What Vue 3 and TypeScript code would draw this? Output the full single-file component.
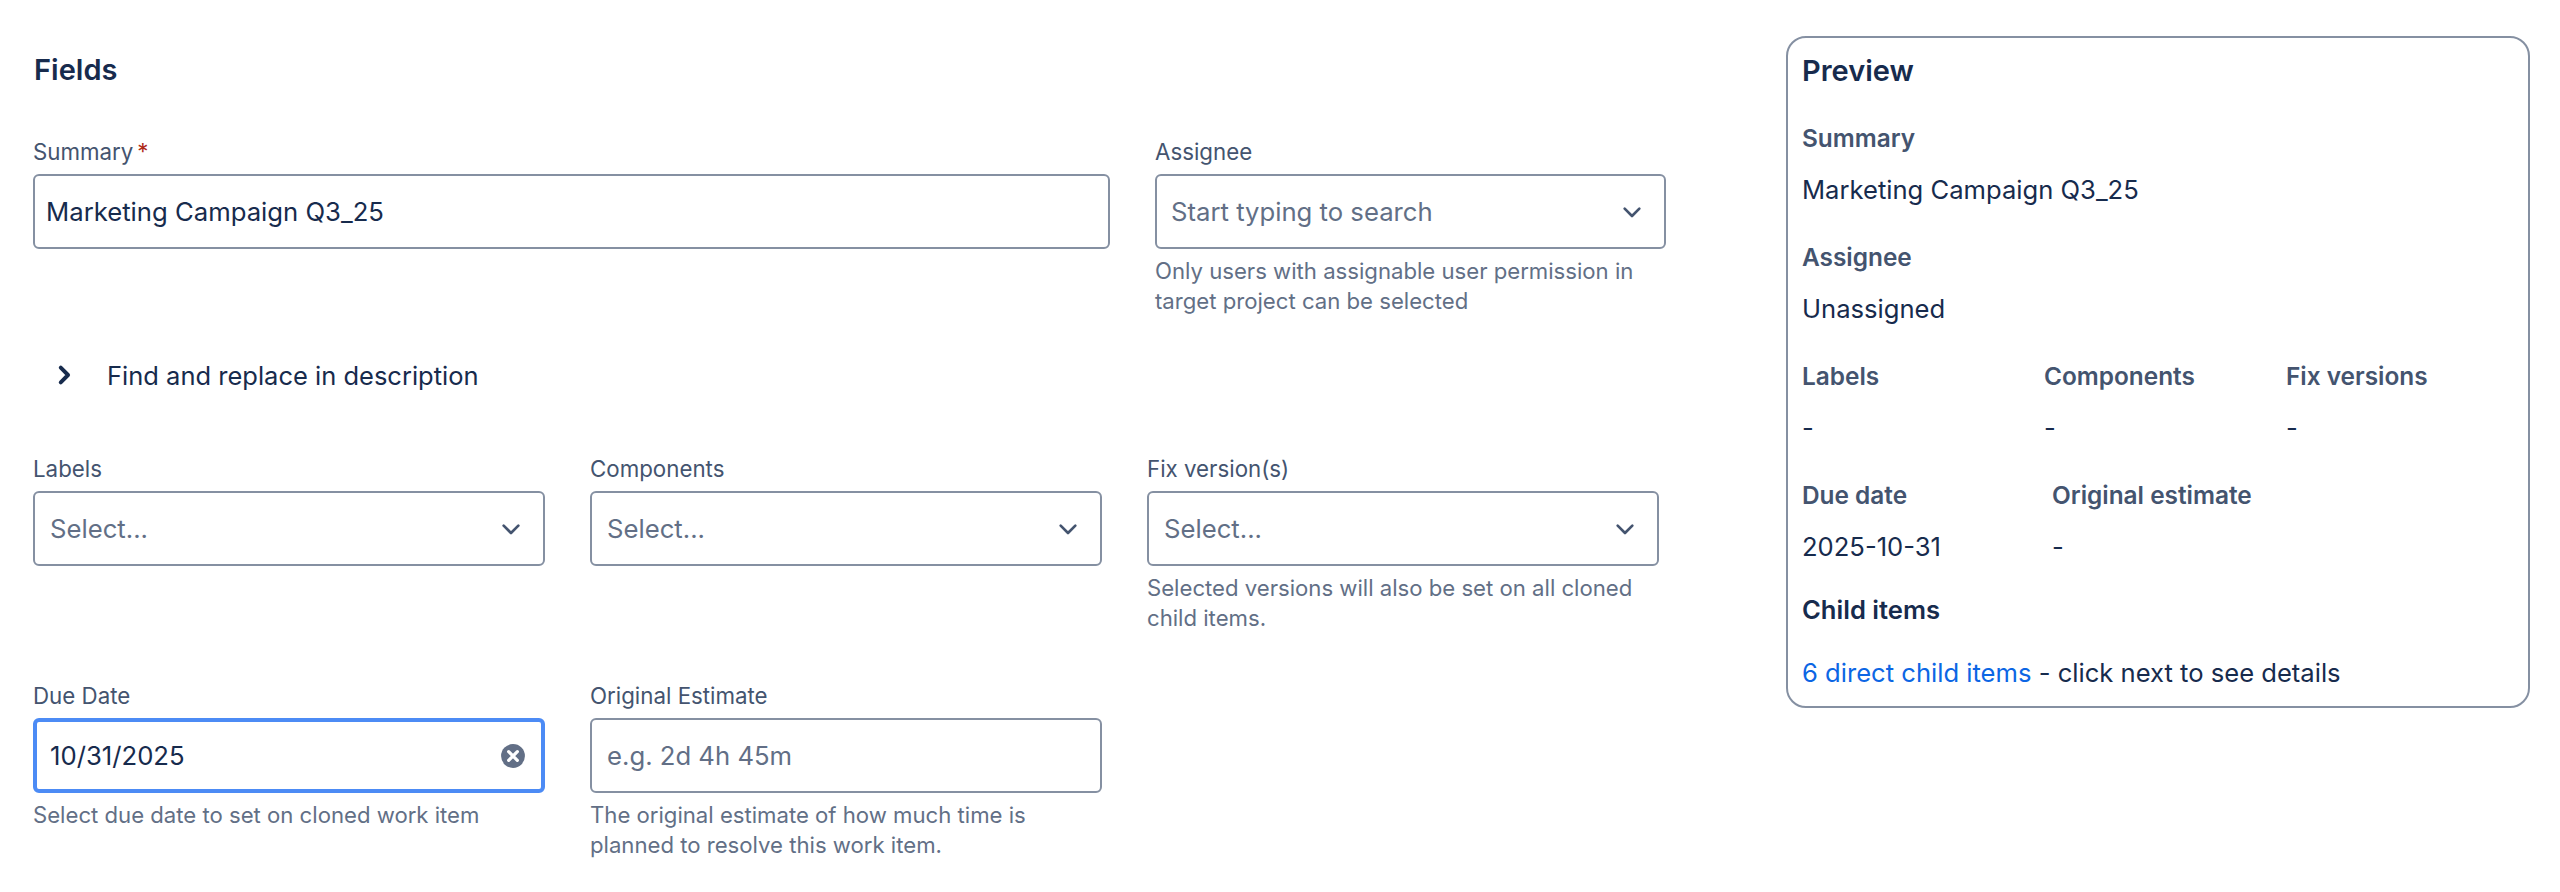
<script setup lang="ts">
interface Cell { label: string; value: string }
const rowA: Cell[] = [
  { label: 'Labels', value: '-' },
  { label: 'Components', value: '-' },
  { label: 'Fix versions', value: '-' },
]
</script>

<template>
  <div class="page">
    <main class="fields">
      <h2 class="title">Fields</h2>

      <div class="row first">
        <div class="field grow">
          <label class="label">Summary<span class="req">*</span></label>
          <div class="box"><span class="val">Marketing Campaign Q3_25</span></div>
        </div>
        <div class="field assignee">
          <label class="label">Assignee</label>
          <div class="box">
            <span class="ph">Start typing to search</span>
            <svg class="chev" viewBox="0 0 24 24"><path d="M6.500 9.500 12 15l5.500-5.500" /></svg>
          </div>
          <p class="help">Only users with assignable user permission in target project can be selected</p>
        </div>
      </div>

      <div class="toggle">
        <svg class="tri" viewBox="0 0 16 16"><path d="M6 3.500 10.500 8 6 12.500" /></svg>
        <span>Find and replace in description</span>
      </div>

      <div class="row three">
        <div class="field">
          <label class="label">Labels</label>
          <div class="box sel">
            <span class="ph">Select...</span>
            <svg class="chev" viewBox="0 0 24 24"><path d="M6.500 9.500 12 15l5.500-5.500" /></svg>
          </div>
        </div>
        <div class="field">
          <label class="label">Components</label>
          <div class="box sel">
            <span class="ph">Select...</span>
            <svg class="chev" viewBox="0 0 24 24"><path d="M6.500 9.500 12 15l5.500-5.500" /></svg>
          </div>
        </div>
        <div class="field">
          <label class="label">Fix version(s)</label>
          <div class="box sel">
            <span class="ph">Select...</span>
            <svg class="chev" viewBox="0 0 24 24"><path d="M6.500 9.500 12 15l5.500-5.500" /></svg>
          </div>
          <p class="help">Selected versions will also be set on all cloned child items.</p>
        </div>
      </div>

      <div class="row three last">
        <div class="field">
          <label class="label">Due Date</label>
          <div class="box sel focus">
            <span class="val">10/31/2025</span>
            <svg class="clear" viewBox="0 0 24 24">
              <circle cx="12" cy="12" r="11" />
              <path d="M8 8l8 8M16 8l-8 8" />
            </svg>
          </div>
          <p class="help">Select due date to set on cloned work item</p>
        </div>
        <div class="field">
          <label class="label">Original Estimate</label>
          <div class="box sel"><span class="ph">e.g. 2d 4h 45m</span></div>
          <p class="help">The original estimate of how much time is planned to resolve this work item.</p>
        </div>
      </div>
    </main>

    <aside class="preview">
      <h3 class="ptitle">Preview</h3>
      <div class="pl lead">Summary</div>
      <div class="pv">Marketing Campaign Q3_25</div>
      <div class="pl">Assignee</div>
      <div class="pv">Unassigned</div>
      <div class="pgrid">
        <div v-for="c in rowA" :key="c.label">
          <div class="pl">{{ c.label }}</div>
          <div class="pv">{{ c.value }}</div>
        </div>
      </div>
      <div class="pflex">
        <div class="pdue">
          <div class="pl">Due date</div>
          <div class="pv">2025-10-31</div>
        </div>
        <div>
          <div class="pl">Original estimate</div>
          <div class="pv">-</div>
        </div>
      </div>
      <div class="pchild">Child items</div>
      <div class="pv plast"><span class="link">6 direct child items</span> - click next to see details</div>
    </aside>
  </div>
</template>

<style>
html, body { margin: 0; background: #fff; }
</style>

<style scoped>
.page {
  display: flex;
  align-items: flex-start;
  width: 2560px;
  height: 892px;
  overflow: hidden;
  box-sizing: border-box;
  padding: 0 30px 0 33px;
  font-family: Inter, "Liberation Sans", sans-serif;
  color: #172b4d;
  -webkit-font-smoothing: antialiased;
}
.fields { width: 1633px; padding-top: 50px; }
.title { margin: 0 0 0 1px; font-size: 29px; line-height: 40px; font-weight: 600; }
.row { display: flex; gap: 45px; }
.first { margin-top: 46px; }
.field { display: flex; flex-direction: column; min-width: 0; }
.grow { flex: 1; }
.assignee { width: 511px; }
.label { font-size: 22.300px; line-height: 32px; color: #44546f; height: 32px; margin-bottom: 6px; }
.req { color: #ae2a19; margin-left: 4px; }
.box {
  box-sizing: border-box;
  height: 75px;
  border: 2px solid #8590a2;
  border-radius: 6px;
  display: flex;
  align-items: center;
  padding: 0 12px 0 11px;
  font-size: 25.700px;
  background: #fff;
}
.sel { padding: 0 14px 0 15px; }
.assignee .box { padding: 0 14px 0 14px; }
.ph { color: #626f86; flex: 1; }
.val { color: #172b4d; flex: 1; }
.chev { width: 32px; height: 32px; fill: none; stroke: #44546f; stroke-width: 2; stroke-linecap: round; stroke-linejoin: round; flex: none; margin-right: 2px; }
.help { margin: 7px 0 0; font-size: 22.150px; line-height: 30px; color: #626f86; }
.toggle { display: flex; align-items: center; margin-top: 29px; height: 60px; padding-left: 20px; font-size: 25.500px; }
.tri { width: 26px; height: 26px; fill: none; stroke: #172b4d; stroke-width: 2.400; stroke-linecap: round; stroke-linejoin: round; margin-right: 30px; margin-left: -2px; }
.three { margin-top: 48px; width: 1626px; }
.three .field { width: 512px; flex: none; }
.last { margin-top: 47px; }
.focus { border-color: #4c8bf5; border-width: 4px; padding: 0 13px; }
.clear { width: 26px; height: 26px; flex: none; margin-right: 2px; }
.clear circle { fill: #626f86; }
.clear path { stroke: #fff; stroke-width: 3; stroke-linecap: round; fill: none; }
.preview {
  box-sizing: border-box;
  width: 744px;
  height: 672px;
  margin: 36px 0 0 120px;
  padding: 11px 14px;
  border: 2px solid #8590a2;
  border-radius: 20px;
}
.ptitle { margin: 0; font-size: 29px; line-height: 44px; font-weight: 600; }
.pl { margin-top: 33px; font-size: 24.400px; line-height: 34px; font-weight: 600; color: #44546f; }
.pl.lead { margin-top: 28px; }
.pv { margin-top: 18px; font-size: 25.600px; line-height: 34px; }
.pgrid { display: grid; grid-template-columns: repeat(3, 242px); }
.pflex { display: flex; }
.pdue { width: 250px; }
.pchild { margin-top: 29px; font-size: 25.600px; line-height: 34px; font-weight: 600; }
.plast { margin-top: 29px; }
.link { color: #0c66e4; }
</style>
